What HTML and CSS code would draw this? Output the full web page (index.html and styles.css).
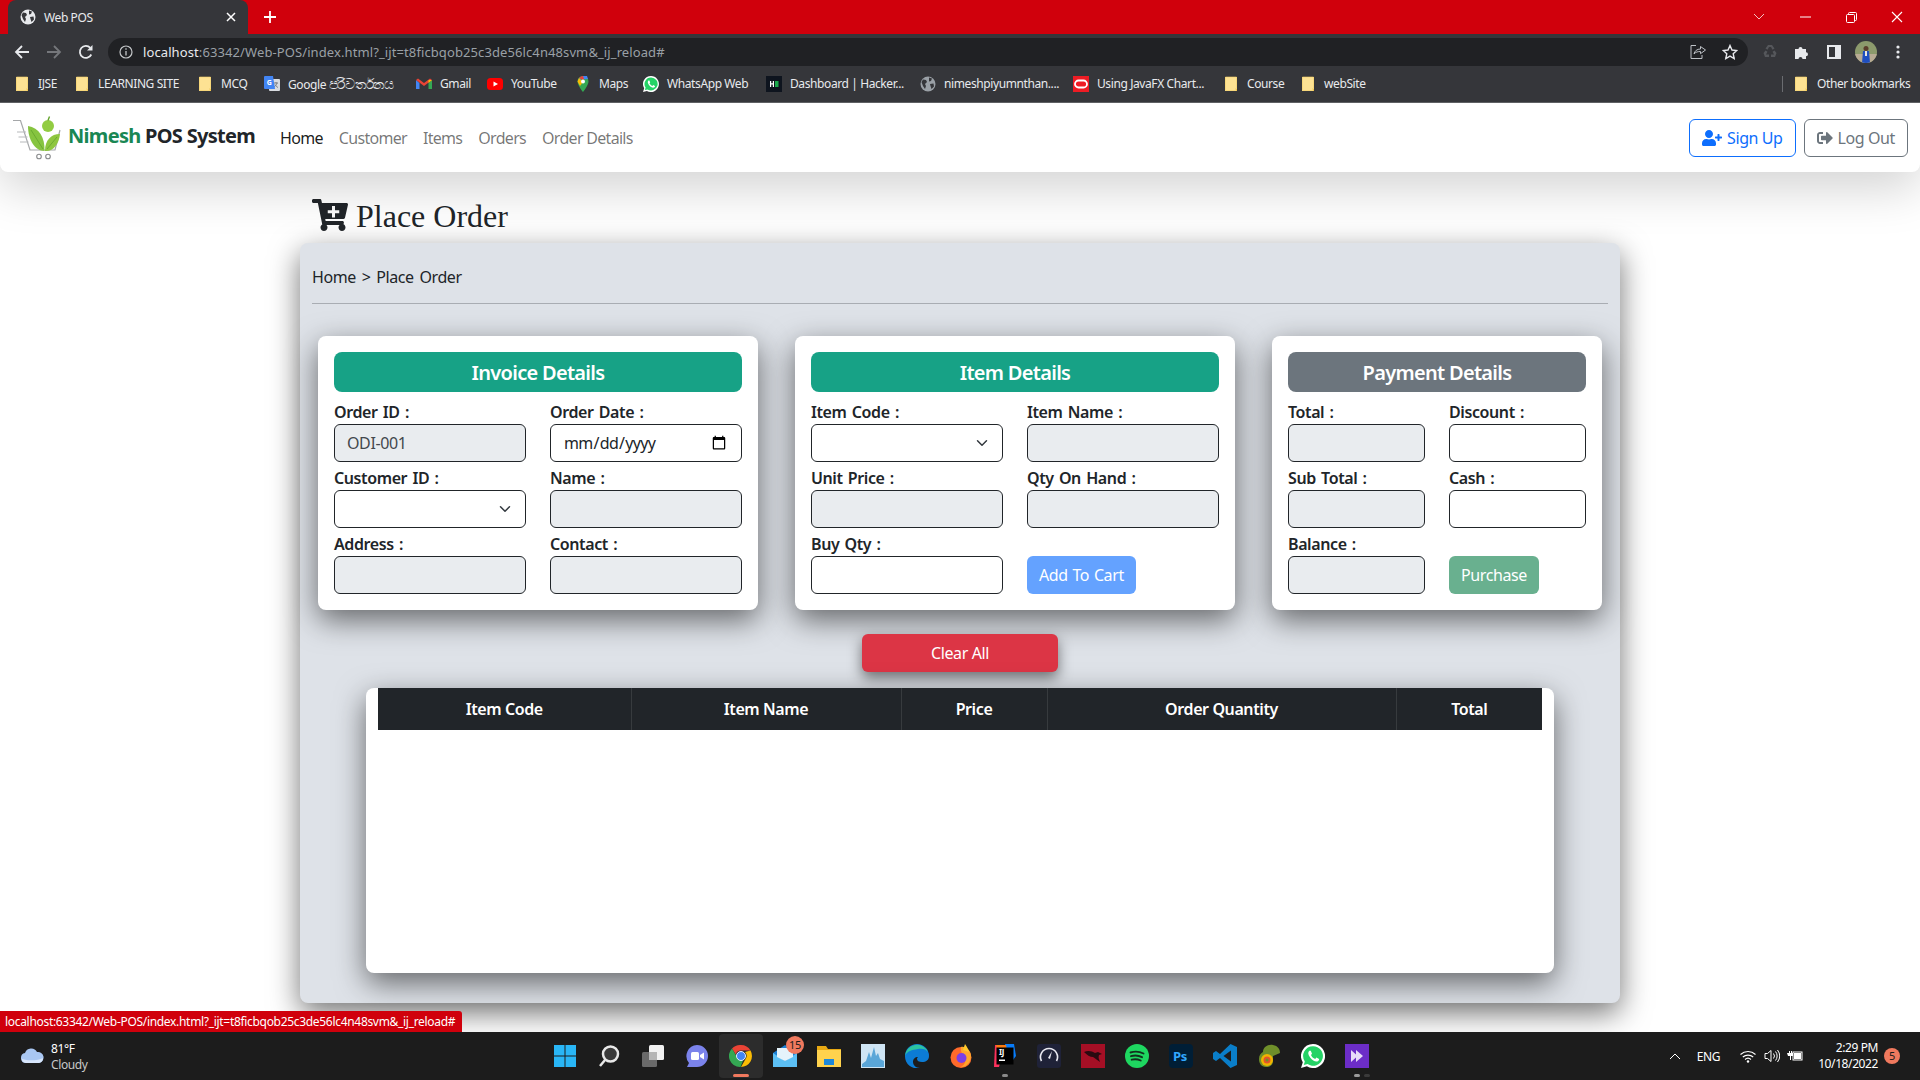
FILE: index.html
```html
<!DOCTYPE html>
<html lang="en">

<head>
    <meta charset="UTF-8">
    <title>Web POS</title>
    <link rel="stylesheet" href="styles.css">
</head>

<body>
    <svg class="defs" width="0" height="0">
        <defs>
            <symbol id="folder" viewBox="0 0 14 16">
                <path d="M0 1h12v12h-1v2H0z" fill="#fde293" />
                <path d="M11 13h1v2h-1z" fill="#f3c64f" />
                <path d="M.5 1h11v11.500h-1v2H.5z" fill="none" stroke="#f3d06a" stroke-width=".6" />
            </symbol>
            <symbol id="globe" viewBox="0 0 16 16">
                <circle cx="8" cy="8" r="7.5" fill="currentColor" />
                <path d="M3 3.500l3 .5 1 2-2 2 1 2-1 3-2-3-1.500-4zM9 1.500l3 1-1 2.500-2 .5zM10 8l3.500-.5.500 3-2.500 2.500-1-3z" fill="#35363a" />
            </symbol>
        </defs>
    </svg>

    <header class="browser">
        <div class="tab-strip">
            <div class="tab">
                <svg class="tab-icon" width="16" height="16"><use href="#globe" /></svg>
                <span class="tab-title">Web POS</span>
                <svg class="tab-close" width="10" height="10" viewBox="0 0 10 10"><path d="M1 1l8 8M9 1l-8 8" stroke="#fff" stroke-width="1.500" /></svg>
            </div>
            <svg class="new-tab" width="12" height="12" viewBox="0 0 12 12"><path d="M6 0v12M0 6h12" stroke="#fff" stroke-width="1.800" /></svg>
            <div class="win-ctrls">
                <div class="win-btn"><svg width="12" height="8" viewBox="0 0 12 8"><path d="M1 1l5 5 5-5" fill="none" stroke="#f2c0c0" /></svg></div>
                <div class="win-btn"><svg width="11" height="2" viewBox="0 0 11 2"><path d="M0 1h11" stroke="#fff" /></svg></div>
                <div class="win-btn"><svg width="11" height="11" viewBox="0 0 11 11"><path d="M2.500 2.500V1.500a1 1 0 0 1 1-1h6a1 1 0 0 1 1 1v6a1 1 0 0 1-1 1h-1M1.500 2.500h6a1 1 0 0 1 1 1v6a1 1 0 0 1-1 1h-6a1 1 0 0 1-1-1v-6a1 1 0 0 1 1-1z" fill="none" stroke="#fff" /></svg></div>
                <div class="win-btn"><svg width="12" height="12" viewBox="0 0 12 12"><path d="M1 1l10 10M11 1L1 11" stroke="#fff" stroke-width="1.100" /></svg></div>
            </div>
        </div>

        <div class="toolbar">
            <div class="tb-btn"><svg width="16" height="16" viewBox="0 0 16 16"><path d="M15 8H2M8 2L2 8l6 6" fill="none" stroke="#e8eaed" stroke-width="1.800" /></svg></div>
            <div class="tb-btn"><svg width="16" height="16" viewBox="0 0 16 16"><path d="M1 8h13M8 2l6 6-6 6" fill="none" stroke="#75777b" stroke-width="1.800" /></svg></div>
            <div class="tb-btn"><svg width="16" height="16" viewBox="0 0 16 16"><path d="M13.300 10.500A6 6 0 1 1 12.300 3.800" fill="none" stroke="#e8eaed" stroke-width="1.800" /><path d="M14.500 1v5.500H9z" fill="#e8eaed" /></svg></div>
            <div class="omnibox">
                <svg class="info-icon" width="14" height="14" viewBox="0 0 14 14"><circle cx="7" cy="7" r="6" fill="none" stroke="#c4c7c9" stroke-width="1.200" /><path d="M7 6v4.500M7 3.300v1.500" stroke="#c4c7c9" stroke-width="1.300" /></svg>
                <span class="url"><span class="url-host">localhost</span>:63342/Web-POS/index.html?_ijt=t8ficbqob25c3de56lc4n48svm&amp;_ij_reload#</span>
                <div class="tb-btn omni-share"><svg width="16" height="16" viewBox="0 0 16 16"><path d="M6 1.500H1v13h11V11" fill="none" stroke="#bdc1c6" /><path d="M4 10c.5-3 3-5 6.500-5V2.500L15.500 6l-5 3.700V7.500C8 7.500 5.500 8 4 10z" fill="none" stroke="#bdc1c6" /></svg></div>
                <div class="tb-btn"><svg width="16" height="16" viewBox="0 0 16 16"><path d="M8 1.500l2 4.500 4.800.5-3.600 3.200 1 4.800L8 12.100l-4.200 2.400 1-4.800L1.200 6.500 6 6z" fill="none" stroke="#e8eaed" stroke-width="1.400" /></svg></div>
            </div>
            <div class="tb-btn"><svg width="16" height="16" viewBox="0 0 16 16"><path d="M6 1h4l2.500 3.500-2 1.200L9 3H7L5.500 5.700l-2-1.200zM1.500 9l2-2.500 2 1.200L4 10.500h3V13H3zM14.500 9l-2-2.500-2 1.200 1.500 2.800H9V13h4z" fill="#55575b" /></svg></div>
            <div class="tb-btn"><svg width="16" height="16" viewBox="0 0 16 16"><path d="M1 5h3.500a2 2 0 1 1 4 0H12v3.200a2 2 0 1 1 0 4V15H8.500a2 2 0 1 0-4 0H1z" fill="#e8eaed" /></svg></div>
            <div class="tb-btn"><svg width="14" height="14" viewBox="0 0 14 14"><path d="M0 0h14v14H0zM2 2v10h6V2z" fill="#e8eaed" fill-rule="evenodd" /></svg></div>
            <div class="tb-btn"><svg width="22" height="22" viewBox="0 0 22 22"><defs><clipPath id="avatar-clip"><circle cx="11" cy="11" r="11" /></clipPath></defs><g clip-path="url(#avatar-clip)"><rect width="22" height="22" fill="#8c9a6c" /><rect y="13" width="22" height="9" fill="#b8ab94" /><path d="M7 22l1-12h6l1 12z" fill="#1f4fc0" /><circle cx="11" cy="7.500" r="2.500" fill="#5b3d2b" /><path d="M10 10h2v5h-2z" fill="#e9e6e0" /></g></svg></div>
            <div class="tb-btn"><svg width="4" height="14" viewBox="0 0 4 14"><circle cx="2" cy="2" r="1.600" fill="#e8eaed" /><circle cx="2" cy="7" r="1.600" fill="#e8eaed" /><circle cx="2" cy="12" r="1.600" fill="#e8eaed" /></svg></div>
        </div>

        <div class="bookmarks">
            <a class="bm bm-ijse"><svg width="14" height="16"><use href="#folder" /></svg>IJSE</a>
            <a class="bm bm-learning"><svg width="14" height="16"><use href="#folder" /></svg>LEARNING SITE</a>
            <a class="bm bm-mcq"><svg width="14" height="16"><use href="#folder" /></svg>MCQ</a>
            <a class="bm bm-translate">
                <svg width="16" height="16" viewBox="0 0 16 16"><rect x="5" y="3" width="11" height="12" rx="1" fill="#d9dce0" /><path d="M10 7h4M12 6v1M13 7c-.5 2-2 3.500-3 4M11 8.500c.5 1.200 2 2.500 3 3" stroke="#7a7d82" fill="none" /><path d="M1 0h8l2 13H1a1 1 0 0 1-1-1V1a1 1 0 0 1 1-1z" fill="#4285f4" /><text x="5" y="9" class="bm-g">G</text></svg>
                <span>Google <span class="sinhala">පරිවර්තනය</span></span>
            </a>
            <a class="bm bm-gmail">
                <svg width="16" height="16" viewBox="0 0 16 16"><path d="M0 4v9h3.500V7z" fill="#4285f4" /><path d="M16 4v9h-3.500V7z" fill="#34a853" /><path d="M0 4l8 6 8-6-2-1.500L8 7 2 2.500z" fill="#ea4335" /><path d="M12.500 7V4L16 4l-3.500 3z" fill="#fbbc04" /></svg>
                Gmail
            </a>
            <a class="bm bm-youtube">
                <svg width="16" height="16" viewBox="0 0 16 16"><rect y="2" width="16" height="12" rx="3.500" fill="#f00" /><path d="M6.500 5.500v5L11 8z" fill="#fff" /></svg>
                YouTube
            </a>
            <a class="bm bm-maps">
                <svg width="16" height="16" viewBox="0 0 16 16"><path d="M8 0a5.500 5.500 0 0 0-5.500 5.500C2.500 9.500 8 16 8 16s5.500-6.500 5.500-10.500A5.500 5.500 0 0 0 8 0z" fill="#34a853" /><path d="M3 3.500L8 0h4l1 3z" fill="#4285f4" /><path d="M2.500 5.500L4 2l4 4-3 4z" fill="#fbbc04" /><path d="M4 2A5.500 5.500 0 0 1 8 0l1 3-1 1z" fill="#ea4335" /><circle cx="8" cy="5.500" r="2" fill="#fff" /></svg>
                Maps
            </a>
            <a class="bm bm-whatsapp">
                <svg width="16" height="16" viewBox="0 0 16 16"><path d="M8 0a8 8 0 0 0-6.800 12.200L0 16l3.900-1.100A8 8 0 1 0 8 0z" fill="#fff" /><path d="M8 1.500a6.500 6.500 0 0 0-5.400 10.100l-.7 2.500 2.600-.7A6.500 6.500 0 1 0 8 1.500z" fill="#25d366" /><path d="M5.500 4.500C4.500 5.500 4.500 7 6 9s3.500 3 4.800 2.600c1-.3 1.300-1.200 1.200-1.600l-1.800-1-.8 1C8 9.500 7 8.500 6.500 7.300l.7-.9-.8-1.900z" fill="#fff" /></svg>
                WhatsApp Web
            </a>
            <a class="bm bm-hacker">
                <svg width="16" height="16" viewBox="0 0 16 16"><rect width="16" height="16" fill="#0e141e" /><path d="M4 5h1.200v2.300h1.600V5H8v6H6.800V8.500H5.200V11H4z" fill="#fff" /><rect x="9" y="5" width="3.500" height="6" fill="#1ba94c" /></svg>
                Dashboard | Hacker...
            </a>
            <a class="bm bm-nimesh"><svg class="bm-globe" width="16" height="16"><use href="#globe" /></svg>nimeshpiyumnthan....</a>
            <a class="bm bm-oracle">
                <svg width="16" height="16" viewBox="0 0 16 16"><rect width="16" height="16" fill="#ed1c24" /><rect x="2" y="4.500" width="12" height="7" rx="3.500" fill="none" stroke="#fff" stroke-width="1.800" /></svg>
                Using JavaFX Chart...
            </a>
            <a class="bm bm-course"><svg width="14" height="16"><use href="#folder" /></svg>Course</a>
            <a class="bm bm-website"><svg width="14" height="16"><use href="#folder" /></svg>webSite</a>
            <div class="bm-divider"></div>
            <a class="bm bm-other"><svg width="14" height="16"><use href="#folder" /></svg>Other bookmarks</a>
        </div>
    </header>

    <div class="viewport">
        <nav class="navbar">
            <a class="brand">
                <svg class="brand-logo" width="50" height="46" viewBox="0 0 50 46">
                    <path d="M1 5.500h7.500L18 35h25l5-20" fill="none" stroke="#a5a7a9" stroke-width="1.200" />
                    <path d="M5 17h9M6.500 22h9M8 27h8.500" stroke="#b8babc" stroke-width="1.200" />
                    <path d="M16 11c11 2 17 11 16.500 25C23 36 16 25 16 11z" fill="#86c440" />
                    <path d="M48 19c-9 0-15 6-15 17 8 1 14-7 15-17z" fill="#8ec63f" />
                    <path d="M19 15l12 19M45 22L35 34" stroke="#63a42c" stroke-width=".8" />
                    <circle cx="36" cy="11" r="6" fill="#92cc42" />
                    <path d="M36 5.500l1.500-4" stroke="#63a42c" stroke-width="1.400" />
                    <circle cx="27" cy="41.500" r="2.300" fill="none" stroke="#8a8c8e" stroke-width="1.100" />
                    <circle cx="36" cy="41.500" r="2.300" fill="none" stroke="#8a8c8e" stroke-width="1.100" />
                </svg>
                <span class="brand-text"><span class="brand-accent">Nimesh</span> POS System</span>
            </a>
            <ul class="nav-links">
                <li><a class="nav-link active">Home</a></li>
                <li><a class="nav-link">Customer</a></li>
                <li><a class="nav-link">Items</a></li>
                <li><a class="nav-link">Orders</a></li>
                <li><a class="nav-link">Order Details</a></li>
            </ul>
            <div class="nav-actions">
                <button class="btn-outline btn-signup">
                    <svg width="20" height="16" viewBox="0 0 640 512"><path fill="currentColor" d="M624 208h-64v-64c0-8.800-7.200-16-16-16h-32c-8.800 0-16 7.200-16 16v64h-64c-8.800 0-16 7.200-16 16v32c0 8.800 7.200 16 16 16h64v64c0 8.800 7.200 16 16 16h32c8.800 0 16-7.200 16-16v-64h64c8.800 0 16-7.200 16-16v-32c0-8.800-7.200-16-16-16zm-400 48c70.700 0 128-57.300 128-128S294.700 0 224 0 96 57.300 96 128s57.300 128 128 128zm89.600 32h-16.700c-22.200 10.200-46.900 16-72.900 16s-50.600-5.800-72.900-16h-16.700C60.200 288 0 348.200 0 422.400V464c0 26.500 21.500 48 48 48h352c26.500 0 48-21.500 48-48v-41.600c0-74.200-60.200-134.400-134.400-134.400z" /></svg>
                    Sign Up
                </button>
                <button class="btn-outline btn-logout">
                    <svg width="16" height="16" viewBox="0 0 512 512"><path fill="currentColor" d="M497 273L329 441c-15 15-41 4.500-41-17v-96H152c-13.300 0-24-10.700-24-24v-96c0-13.300 10.700-24 24-24h136V88c0-21.400 25.900-32 41-17l168 168c9.300 9.400 9.300 24.600 0 34zM192 436v-40c0-6.600-5.400-12-12-12H96c-17.700 0-32-14.300-32-32V160c0-17.700 14.300-32 32-32h84c6.600 0 12-5.400 12-12V76c0-6.600-5.400-12-12-12H96c-53 0-96 43-96 96v192c0 53 43 96 96 96h84c6.600 0 12-5.400 12-12z" /></svg>
                    Log Out
                </button>
            </div>
        </nav>

        <main class="page">
            <h2 class="page-title">
                <svg class="title-icon" width="36" height="32" viewBox="0 0 576 512"><path fill="#212529" d="M528.120 301.319l47.273-208C578.806 78.301 567.391 64 551.990 64H159.208l-9.166-44.810C147.758 8.021 137.930 0 126.529 0H24C10.745 0 0 10.745 0 24v16c0 13.255 10.745 24 24 24h69.883l70.248 343.435C147.325 417.100 136 435.222 136 456c0 30.928 25.072 56 56 56s56-25.072 56-56c0-15.674-6.447-29.835-16.824-40h209.647C430.447 426.165 424 440.326 424 456c0 30.928 25.072 56 56 56s56-25.072 56-56c0-22.172-12.888-41.332-31.579-50.405l5.517-24.276c3.413-15.018-8.002-29.319-23.403-29.319H218.117l-6.545-32h293.145c11.206 0 20.920-7.754 23.403-18.681z" /><path fill="#fbfbfb" d="M320 112h48v68h68v48h-68v68h-48v-68h-68v-48h68z" /></svg>
                Place Order
            </h2>

            <section class="panel">
                <div class="breadcrumb">Home &gt; Place Order</div>
                <hr class="divider">

                <div class="cards">
                    <div class="card">
                        <h4 class="card-head head-teal">Invoice Details</h4>
                        <div class="form-grid">
                            <div class="field"><label>Order ID :</label><input type="text" value="ODI-001" disabled></div>
                            <div class="field"><label>Order Date :</label><input type="date"></div>
                            <div class="field"><label>Customer ID :</label><select></select></div>
                            <div class="field"><label>Name :</label><input type="text" disabled></div>
                            <div class="field"><label>Address :</label><input type="text" disabled></div>
                            <div class="field"><label>Contact :</label><input type="text" disabled></div>
                        </div>
                    </div>

                    <div class="card">
                        <h4 class="card-head head-teal">Item Details</h4>
                        <div class="form-grid">
                            <div class="field"><label>Item Code :</label><select></select></div>
                            <div class="field"><label>Item Name :</label><input type="text" disabled></div>
                            <div class="field"><label>Unit Price :</label><input type="text" disabled></div>
                            <div class="field"><label>Qty On Hand :</label><input type="text" disabled></div>
                            <div class="field"><label>Buy Qty :</label><input type="text"></div>
                            <div class="field-action"><button class="btn btn-cart">Add To Cart</button></div>
                        </div>
                    </div>

                    <div class="card">
                        <h4 class="card-head head-gray">Payment Details</h4>
                        <div class="form-grid">
                            <div class="field"><label>Total :</label><input type="text" disabled></div>
                            <div class="field"><label>Discount :</label><input type="text"></div>
                            <div class="field"><label>Sub Total :</label><input type="text" disabled></div>
                            <div class="field"><label>Cash :</label><input type="text"></div>
                            <div class="field"><label>Balance :</label><input type="text" disabled></div>
                            <div class="field-action"><button class="btn btn-purchase">Purchase</button></div>
                        </div>
                    </div>
                </div>

                <button class="btn btn-clear">Clear All</button>

                <div class="table-card">
                    <table class="order-table">
                        <thead>
                            <tr>
                                <th class="col-code">Item Code</th>
                                <th class="col-name">Item Name</th>
                                <th class="col-price">Price</th>
                                <th class="col-qty">Order Quantity</th>
                                <th>Total</th>
                            </tr>
                        </thead>
                        <tbody></tbody>
                    </table>
                </div>
            </section>
        </main>

        <div class="status-bubble">localhost:63342/Web-POS/index.html?_ijt=t8ficbqob25c3de56lc4n48svm&amp;_ij_reload#</div>
    </div>

    <footer class="taskbar">
        <div class="weather">
            <svg width="24" height="16" viewBox="0 0 24 16"><path d="M6 15a5 5 0 0 1-1-9.900A6.500 6.500 0 0 1 17 4a5.500 5.500 0 0 1 2 11z" fill="#a9c7f2" /><path d="M1.500 10.500C5 13 18 13 23 10a5 5 0 0 1-4 5H6a5 5 0 0 1-4.500-4.500z" fill="#d8e6fb" /></svg>
            <div class="weather-text">
                <span class="temp">81°F</span>
                <span class="sky">Cloudy</span>
            </div>
        </div>

        <div class="task-icons">
            <div class="task-btn"><svg width="24" height="24" viewBox="0 0 24 24"><path d="M1 1h10.500v10.500H1zM12.500 1H23v10.500H12.500zM1 12.500h10.500V23H1zM12.500 12.500H23V23H12.500z" fill="#29b6f6" /></svg></div>
            <div class="task-btn"><svg width="24" height="24" viewBox="0 0 24 24"><circle cx="13.500" cy="10" r="7.500" fill="#3a3a3a" stroke="#e8e8e8" stroke-width="2.500" /><path d="M8 16l-5 6" stroke="#e8e8e8" stroke-width="2.500" /></svg></div>
            <div class="task-btn"><svg width="24" height="24" viewBox="0 0 24 24"><rect x="8" y="1" width="15" height="15" rx="1.500" fill="#f2f2f2" /><rect x="1" y="8" width="15" height="15" rx="1.500" fill="#6a6a6a" /><rect x="8" y="8" width="8" height="8" fill="#b5b5b5" /></svg></div>
            <div class="task-btn"><svg width="24" height="24" viewBox="0 0 24 24"><path d="M12 1a11 11 0 0 1 0 22H2l2-4A11 11 0 0 1 12 1z" fill="#7b83eb" /><rect x="6" y="8" width="8" height="8" rx="1.500" fill="#fff" /><path d="M15 11l4-2.500v7L15 13z" fill="#fff" /></svg></div>
            <div class="task-btn task-active">
                <svg width="24" height="24" viewBox="0 0 24 24"><path d="M12 1a11 11 0 0 1 9.500 5.500H12a5.500 5.500 0 0 0-5.300 4L3 4.500A11 11 0 0 1 12 1z" fill="#ea4335" /><path d="M21.500 6.500A11 11 0 0 1 12 23l4.700-8.200A5.500 5.500 0 0 0 16 8z" fill="#fbbc04" /><path d="M3 4.500l4.600 8a5.500 5.500 0 0 0 6.800 3L11.500 23A11 11 0 0 1 3 4.500z" fill="#34a853" /><circle cx="12" cy="12" r="4.500" fill="#4285f4" stroke="#e8f0fe" /></svg>
                <span class="task-bar"></span>
            </div>
            <div class="task-btn">
                <svg width="24" height="24" viewBox="0 0 24 24"><path d="M0 9L12 1l12 8v14H0z" fill="#1b7fd4" /><path d="M0 9l12 8 12-8v14H0z" fill="#5cc0f5" /><path d="M4 4h16v9l-8 4-8-4z" fill="#e5f3fb" /></svg>
                <span class="mail-badge">15</span>
            </div>
            <div class="task-btn"><svg width="24" height="24" viewBox="0 0 24 24"><path d="M0 2h9l2 3h13v18H0z" fill="#e8a913" /><path d="M0 6h24v17H0z" fill="#ffd24d" /><rect x="7" y="15" width="10" height="6" fill="#1e88d9" /></svg></div>
            <div class="task-btn"><svg width="24" height="24" viewBox="0 0 24 24"><rect width="24" height="24" fill="#cfe5f4" /><path d="M1 20l4-3 3-9 2 6 3-11 2 9 2-3 2 6 4 2v6H1z" fill="#5aa6d8" /></svg></div>
            <div class="task-btn"><svg width="24" height="24" viewBox="0 0 24 24"><path d="M12 0a12 12 0 0 1 12 12c0 4-3 6-7 6-3 0-5-1-5-3 0-1 .5-1.500 1-2-3 0-5 2-5 5 0 3 3 6 7 6A12 12 0 0 1 0 12 12 12 0 0 1 12 0z" fill="#0c7cd5" /><path d="M0 12A12 12 0 0 1 23 8c-2-3-6-4-10-3C7 6 2 7 0 12z" fill="#2cc4a0" /></svg></div>
            <div class="task-btn"><svg width="24" height="24" viewBox="0 0 24 24"><circle cx="12" cy="13.500" r="10.500" fill="#ff6a2b" /><path d="M12 3c5-1 10 4 10 9 0 6-4 11-10 11 5-3 5-7 3-10-1-3-4-5-3-10z" fill="#ffa52b" /><path d="M16 0c2 3 3 4 4 8l-6-2z" fill="#ffc92b" /><circle cx="12.500" cy="14" r="5" fill="#7b3fe4" /></svg></div>
            <div class="task-btn">
                <svg width="24" height="24" viewBox="0 0 24 24"><path d="M2 1h10L6 23H1z" fill="#fe315d" /><path d="M12 0h9l2 12-6 8z" fill="#087cfa" /><path d="M3 1h10l2 10H5z" fill="#f97a12" /><rect x="3.500" y="3.500" width="17" height="17" fill="#000" /><text x="6" y="11" class="ij-text">IJ</text><rect x="6" y="15.500" width="6" height="1.500" fill="#fff" /></svg>
                <span class="task-dot"></span>
            </div>
            <div class="task-btn"><svg width="24" height="24" viewBox="0 0 24 24"><rect width="24" height="24" rx="3" fill="#1f2238" /><path d="M4.500 17a8.500 8.500 0 1 1 15 0" fill="none" stroke="#e8e8f0" stroke-width="1.600" /><path d="M11 14l4-7-2 8z" fill="#e8e8f0" /></svg></div>
            <div class="task-btn"><svg width="24" height="24" viewBox="0 0 24 24"><rect width="24" height="24" fill="#a50f25" /><path d="M3 8c4-2 8-1 11 1l3-1 4 2-3 1c-1 3 0 4 1 7-3-2-5-4-7-5-3 0-6-2-9-5z" fill="#2a0a10" /></svg></div>
            <div class="task-btn"><svg width="24" height="24" viewBox="0 0 24 24"><circle cx="12" cy="12" r="12" fill="#1ed760" /><path d="M5.500 8.500c4-1.200 9-1 13 1M6 12.200c3.500-1 7.500-.8 11 1M6.700 15.700c3-.8 6-.6 9 .8" fill="none" stroke="#12301e" stroke-width="1.900" stroke-linecap="round" /></svg></div>
            <div class="task-btn"><svg width="24" height="24" viewBox="0 0 24 24"><rect width="24" height="24" rx="4" fill="#001e36" /><text x="4" y="17" class="ps-text">Ps</text></svg></div>
            <div class="task-btn"><svg width="24" height="24" viewBox="0 0 24 24"><path d="M17.500 0L24 3v18l-6.500 3L7 14l-4 3-3-2V9l3-2 4 3z" fill="#0a7ec9" /><path d="M18 6.500L10.500 12l7.500 5.500z" fill="#1c1c1c" /></svg></div>
            <div class="task-btn"><svg width="24" height="24" viewBox="0 0 24 24"><path d="M6 8c0-5 5-8 10-7 5 1 7 4 7 8l-7 3v5c0 4-3 6-7 6-5 0-7-4-7-8s2-6 4-7z" fill="#6f8f2a" /><circle cx="10" cy="16" r="6" fill="#f0b400" /><circle cx="10" cy="16" r="3.500" fill="#e4552b" /><circle cx="10" cy="16" r="1.500" fill="#6f8f2a" /></svg></div>
            <div class="task-btn"><svg width="24" height="24" viewBox="0 0 24 24"><path d="M12 0a12 12 0 0 0-10.200 18.300L0 24l5.900-1.700A12 12 0 1 0 12 0z" fill="#fff" /><path d="M12 2.200a9.800 9.800 0 0 0-8.200 15.200l-1 3.700 3.800-1A9.800 9.800 0 1 0 12 2.200z" fill="#25d366" /><path d="M8.300 6.800c-1.500 1.500-1.500 3.700.8 6.700s5.300 4.500 7.200 3.900c1.500-.5 2-1.800 1.800-2.400l-2.700-1.500-1.200 1.500c-2-.6-3.500-2.100-4.200-3.900l1-1.400-1.200-2.900z" fill="#fff" /></svg></div>
            <div class="task-btn">
                <svg width="24" height="24" viewBox="0 0 24 24"><rect width="24" height="24" fill="#6c2dc7" /><path d="M6 6l5 4.500V6l7 6-7 6v-4.500L6 18z" fill="#e8dcf8" /></svg>
                <span class="task-dot task-dot-wide"></span>
            </div>
        </div>

        <div class="tray">
            <svg class="tray-chevron" width="12" height="7" viewBox="0 0 12 7"><path d="M1 6l5-5 5 5" fill="none" stroke="#fff" /></svg>
            <span class="tray-lang">ENG</span>
            <svg class="tray-wifi" width="16" height="13" viewBox="0 0 16 13"><path d="M.5 4.500a11 11 0 0 1 15 0M2.800 7a8 8 0 0 1 10.400 0M5 9.500a4.500 4.500 0 0 1 6 0" fill="none" stroke="#fff" stroke-width="1.100" /><circle cx="8" cy="11.500" r="1.200" fill="#fff" /></svg>
            <svg class="tray-sound" width="16" height="14" viewBox="0 0 16 14"><path d="M1 4.500h2.500L7 1.500v11l-3.500-3H1z" fill="none" stroke="#fff" /><path d="M9.500 4.500a4 4 0 0 1 0 5M11.500 2.500a7 7 0 0 1 0 9M13.500 1a10 10 0 0 1 0 12" fill="none" stroke="#fff" /></svg>
            <svg class="tray-battery" width="16" height="12" viewBox="0 0 16 12"><path d="M0 3h2V1h1v2h1V1h1v2h1v3H4v4H3V6H1z" fill="#fff" /><rect x="6" y="2" width="9" height="8" fill="none" stroke="#fff" /><rect x="7" y="3" width="7" height="6" fill="#fff" /></svg>
            <div class="clock">
                <span>2:29 PM</span>
                <span>10/18/2022</span>
            </div>
            <span class="notify-badge">5</span>
        </div>
    </footer>
</body>

</html>
```

FILE: styles.css
```css
* {
    box-sizing: border-box;
}

body {
    margin: 0;
    height: 100vh;
    display: flex;
    flex-direction: column;
    overflow: hidden;
    font-family: "Noto Sans", sans-serif;
    font-size: 16px;
    color: #212529;
    background: #fff;
    letter-spacing: -0.4px;
}

.defs {
    position: absolute;
}

/* browser frame */
.browser {
    flex: none;
    font-size: 12px;
    color: #e8eaed;
}

.tab-strip {
    height: 34px;
    display: flex;
    align-items: center;
    background: #d0000c;
}

.tab {
    width: 240px;
    height: 34px;
    margin-left: 8px;
    padding: 0 12px;
    display: flex;
    align-items: center;
    background: #35363a;
    border-radius: 8px 8px 0 0;
    color: #e8eaed;
}

.tab-title {
    flex: 1;
    margin-left: 8px;
}

.new-tab {
    margin-left: 16px;
}

.win-ctrls {
    display: flex;
    margin-left: auto;
}

.win-btn {
    width: 46px;
    height: 28px;
    display: flex;
    align-items: center;
    justify-content: center;
    align-self: flex-start;
}

.toolbar {
    height: 32px;
    padding: 4px 6px 0;
    display: flex;
    align-items: center;
    background: #35363a;
}

.tb-btn {
    flex: none;
    width: 32px;
    height: 28px;
    display: flex;
    align-items: center;
    justify-content: center;
}

.omnibox {
    flex: 1;
    height: 28px;
    margin: 0 6px;
    padding: 0 2px 0 11px;
    display: flex;
    align-items: center;
    background: #202124;
    border-radius: 14px;
    font-size: 13px;
    letter-spacing: 0.1px;
}

.info-icon {
    flex: none;
}

.url {
    flex: 1;
    margin-left: 10px;
    color: #9aa0a6;
}

.url-host {
    color: #e8eaed;
}

.bookmarks {
    height: 37px;
    padding: 0 0 1px 16px;
    display: flex;
    align-items: center;
    background: #35363a;
    border-bottom: 1px solid #5f6164;
}

.bm {
    display: flex;
    align-items: center;
    gap: 8px;
    white-space: nowrap;
}

.bm-ijse {
    width: 60px;
}

.bm-learning {
    width: 123px;
}

.bm-mcq {
    width: 65px;
}

.bm-translate {
    width: 152px;
}

.bm-gmail {
    width: 71px;
}

.bm-youtube {
    width: 88px;
}

.bm-maps {
    width: 68px;
}

.bm-whatsapp {
    width: 123px;
}

.bm-hacker {
    width: 154px;
}

.bm-nimesh {
    width: 153px;
}

.bm-oracle {
    width: 152px;
}

.bm-course {
    width: 77px;
}

.bm-website {
    width: 80px;
}

.sinhala {
    font-size: 14px;
}

.bm-g {
    font-size: 7px;
    font-weight: 700;
    fill: #fff;
    text-anchor: middle;
}

.bm-globe {
    color: #9aa0a6;
}

.bm-divider {
    width: 1px;
    height: 16px;
    margin-left: auto;
    margin-right: 12px;
    background: #6a6c70;
}

.bm-other {
    width: 125px;
}

/* page */
.viewport {
    flex: 1;
    min-height: 0;
    position: relative;
    display: flex;
    flex-direction: column;
    overflow: hidden;
}

.navbar {
    flex: none;
    height: 69px;
    padding: 0 12px 0 12px;
    display: flex;
    align-items: center;
    background: #fff;
    border-radius: 0 0 8px 8px;
    box-shadow: 0 16px 48px rgba(0, 0, 0, 0.175);
    position: relative;
}

.brand {
    display: flex;
    align-items: center;
    margin-right: 17px;
    letter-spacing: -0.7px;
}

.brand-logo {
    margin-right: 6px;
}

.brand-text {
    font-size: 20px;
    font-weight: 700;
    position: relative;
    bottom: 2px;
}

.brand-accent {
    color: #198754;
}

.nav-links {
    display: flex;
    margin: 0;
    padding: 0;
    list-style: none;
    letter-spacing: -0.7px;
}

.nav-link {
    padding: 0 8px;
    color: rgba(0, 0, 0, 0.55);
}

.nav-link.active {
    color: rgba(0, 0, 0, 0.9);
}

.nav-actions {
    display: flex;
    gap: 8px;
    margin-left: auto;
}

.btn-outline {
    height: 38px;
    padding: 0 12px;
    display: flex;
    align-items: center;
    gap: 5px;
    background: #fff;
    border: 1px solid;
    border-radius: 6px;
    font: inherit;
    letter-spacing: inherit;
}

.btn-signup {
    color: #0d6efd;
}

.btn-logout {
    color: #6c757d;
}

.page {
    width: 1320px;
    margin: 0 auto;
}

.page-title {
    height: 71px;
    margin: 0;
    padding: 18px 0 0 12px;
    display: flex;
    align-items: center;
    gap: 8px;
    font-family: "Liberation Serif", serif;
    font-size: 32px;
    font-weight: 400;
    letter-spacing: 0;
}

.title-icon {
    margin-bottom: 4px;
}

.panel {
    height: 760px;
    padding: 22px 12px 30px;
    display: flex;
    flex-direction: column;
    background: #dee2e8;
    border-radius: 8px;
    box-shadow: 0 10px 30px rgba(0, 0, 0, 0.55);
}

.breadcrumb {
    line-height: 24px;
    word-spacing: 2px;
}

.divider {
    width: 100%;
    margin: 14px 0 32px;
    border: 0;
    border-top: 1px solid #a9adb3;
}

.cards {
    display: grid;
    grid-template-columns: 440px 440px 330px;
    gap: 37px;
    margin: 0 6px;
}

.card {
    padding: 16px;
    background: #fff;
    border-radius: 8px;
    box-shadow: 0 10px 30px rgba(0, 0, 0, 0.55);
}

.card-head {
    height: 40px;
    margin: 0 0 8px;
    padding-top: 1px;
    color: #fff;
    border-radius: 8px;
    font-size: 20px;
    font-weight: 600;
    letter-spacing: -0.7px;
    line-height: 40px;
    text-align: center;
}

.head-teal {
    background: #17a286;
}

.head-gray {
    background: #6c757d;
}

.form-grid {
    display: grid;
    grid-template-columns: 1fr 1fr;
    gap: 4px 24px;
}

.field label {
    display: block;
    font-weight: 600;
    line-height: 24px;
    word-spacing: 1.5px;
}

.field input,
.field select {
    display: block;
    width: 100%;
    height: 38px;
    padding: 0 12px;
    background-color: #fff;
    border: 1px solid #212529;
    border-radius: 6px;
    color: #212529;
    font: inherit;
    letter-spacing: inherit;
    opacity: 1;
}

.field input[type="date"] {
    letter-spacing: -0.7px;
}

.field input:disabled {
    background: #e9ecef;
    color: #43484d;
}

.field select {
    appearance: none;
    background-image: url("data:image/svg+xml,%3csvg xmlns='http://www.w3.org/2000/svg' viewBox='0 0 16 16'%3e%3cpath fill='none' stroke='%23343a40' stroke-linecap='round' stroke-linejoin='round' stroke-width='2' d='M2 5l6 6 6-6'/%3e%3c/svg%3e");
    background-repeat: no-repeat;
    background-position: right 12px center;
    background-size: 16px 12px;
}

.field-action {
    display: flex;
    align-items: flex-end;
}

.btn {
    height: 38px;
    padding: 0 12px;
    color: #fff;
    border: 0;
    border-radius: 6px;
    font: inherit;
    letter-spacing: inherit;
}

.btn-cart {
    background: #64a2ff;
    word-spacing: 1px;
}

.btn-purchase {
    background: #69b08f;
}

.btn-clear {
    flex: none;
    width: 196px;
    margin: 24px auto 16px;
    background: #dc3545;
    box-shadow: 0 6px 14px rgba(0, 0, 0, 0.5);
}

.table-card {
    width: 1188px;
    height: 285px;
    margin: 0 auto;
    padding: 0 12px;
    background: #fff;
    border-radius: 8px;
    box-shadow: 0 10px 30px rgba(0, 0, 0, 0.55);
}

.order-table {
    width: 100%;
    border-collapse: collapse;
    table-layout: fixed;
}

.order-table th {
    height: 42px;
    padding: 0;
    background: #212529;
    border-right: 1px solid #373b3e;
    color: #fff;
    font-weight: 600;
    text-align: center;
}

.order-table th:last-child {
    border-right: 0;
}

.col-code {
    width: 253px;
}

.col-name {
    width: 270px;
}

.col-price {
    width: 146px;
}

.col-qty {
    width: 349px;
}

.status-bubble {
    position: absolute;
    left: 0;
    bottom: 0;
    width: 462px;
    height: 21px;
    padding-left: 5px;
    background: #d0000c;
    border-radius: 0 3px 0 0;
    color: #fff;
    font-size: 12px;
    letter-spacing: -0.31px;
    line-height: 21px;
    white-space: nowrap;
}

/* windows taskbar */
.taskbar {
    flex: none;
    height: 48px;
    display: grid;
    grid-template-columns: 1fr auto 1fr;
    align-items: center;
    background: #1c1c1c;
    color: #fff;
    font-size: 12px;
}

.weather {
    display: flex;
    align-items: center;
    gap: 7px;
    padding-left: 20px;
}

.weather-text {
    display: flex;
    flex-direction: column;
    padding-top: 2px;
    line-height: 16px;
}

.sky {
    color: #c8c8c8;
}

.task-icons {
    display: flex;
    margin-left: 2px;
}

.task-btn {
    width: 44px;
    height: 44px;
    position: relative;
    display: flex;
    align-items: center;
    justify-content: center;
}

.task-active {
    background: #2c2c2c;
    border-radius: 4px;
}

.task-bar {
    position: absolute;
    left: 14px;
    bottom: 1px;
    width: 16px;
    height: 3px;
    background: #f0795e;
    border-radius: 2px;
}

.task-dot {
    position: absolute;
    left: 19px;
    bottom: 1px;
    width: 6px;
    height: 3px;
    background: #8a8a8a;
    border-radius: 2px;
}

.task-dot-wide {
    background: #9a9a9a;
    box-shadow: 10px 0 0 #3a3a3a;
}

.mail-badge {
    position: absolute;
    top: 2px;
    right: 3px;
    width: 18px;
    height: 18px;
    background: #f0795e;
    border-radius: 50%;
    color: #1c1c1c;
    font-size: 11px;
    line-height: 18px;
    text-align: center;
}

.ij-text {
    font-size: 8px;
    font-weight: 700;
    fill: #fff;
}

.ps-text {
    font-size: 13px;
    font-weight: 700;
    fill: #31a8ff;
}

.tray {
    display: flex;
    align-items: center;
    justify-content: flex-end;
    padding-right: 20px;
}

.tray-lang {
    margin: 0 20px 0 16px;
}

.tray-sound {
    margin-left: 8px;
}

.tray-battery {
    margin-left: 7px;
}

.clock {
    display: flex;
    flex-direction: column;
    align-items: flex-end;
    margin-left: 15px;
    line-height: 16px;
}

.notify-badge {
    width: 16px;
    height: 16px;
    margin-left: 6px;
    background: #f0795e;
    border-radius: 50%;
    color: #1c1c1c;
    font-size: 11px;
    line-height: 16px;
    text-align: center;
}
```
